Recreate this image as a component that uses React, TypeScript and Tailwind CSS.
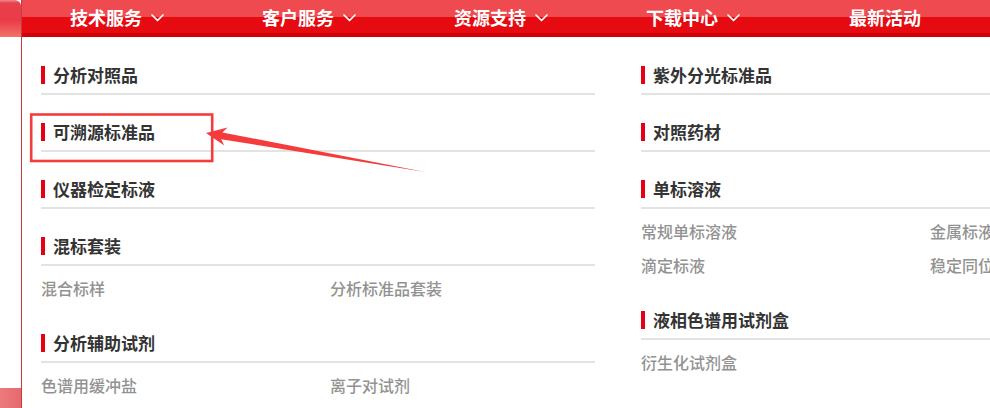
import React from "react";

type Section = { title: string; items?: string[] };

const left: Section[] = [
  { title: "分析对照品" },
  { title: "可溯源标准品" },
  { title: "仪器检定标液" },
  { title: "混标套装", items: ["混合标样", "分析标准品套装"] },
  { title: "分析辅助试剂", items: ["色谱用缓冲盐", "离子对试剂"] },
];

const right: Section[] = [
  { title: "紫外分光标准品" },
  { title: "对照药材" },
  { title: "单标溶液", items: ["常规单标溶液", "金属标液", "滴定标液", "稳定同位素标液"] },
  { title: "液相色谱用试剂盒", items: ["衍生化试剂盒"] },
];

const nav = [
  { label: "技术服务", chev: true },
  { label: "客户服务", chev: true },
  { label: "资源支持", chev: true },
  { label: "下载中心", chev: true },
  { label: "最新活动", chev: false },
];

function Chevron() {
  return (
    <svg width="13" height="8" viewBox="0 0 13 8" className="ml-[9px] mt-[-2px]">
      <polyline points="1,1 6.5,6.5 12,1" fill="none" stroke="white" strokeWidth="1.7" strokeLinecap="round" strokeLinejoin="round" />
    </svg>
  );
}

function Column({ sections }: { sections: Section[] }) {
  return (
    <div className="w-[554px] shrink-0">
      {sections.map((s) => (
        <div key={s.title} className="mb-[19px]">
          <div className="h-[38px] border-b-2 border-[#e3e3e3] flex items-center">
            <div className="w-[4px] h-[18px] bg-[#e60012] mr-[8px]" />
            <span className="text-[17px] font-bold text-[#333] leading-none mt-[-2px]">{s.title}</span>
          </div>
          {s.items && (
            <div className="pt-[6px] grid grid-cols-[289px_289px] auto-rows-[34px]">
              {s.items.map((it) => (
                <div key={it} className="text-[16px] leading-[32px] font-medium text-[#929292] whitespace-nowrap">
                  {it}
                </div>
              ))}
            </div>
          )}
        </div>
      ))}
    </div>
  );
}

export default function App() {
  return (
    <div
      className="relative w-[990px] h-[408px] overflow-hidden bg-white flex"
      style={{ fontFamily: '"Noto Sans CJK SC", "Noto Sans", sans-serif' }}
    >
      {/* left strip */}
      <div className="w-[22px] h-full shrink-0 border-r border-[#c8383c] flex flex-col">
        <div className="h-[37px] rounded-tr-[6px] bg-[linear-gradient(#f08a8e_0,#e8404a_3px,#ea3a48_20px,#f07466_37px)]" />
        <div className="flex-1" />
        <div className="h-[20px] bg-[linear-gradient(90deg,#ec7a7c,#e46a6e)]" />
      </div>

      {/* main */}
      <div className="flex-1 min-w-0 flex flex-col">
        <div className="h-[37px] shrink-0 flex bg-[linear-gradient(#ee4a50_0,#ee4a50_17px,#e60b10_17px,#e60b10_33px,#d00008_33px)]">
          {nav.map((n) => (
            <div key={n.label} className="w-[192px] shrink-0 flex items-center justify-center first:ml-[-1px]">
              <span className="text-[18px] font-bold text-white leading-none mt-[-3px]">{n.label}</span>
              {n.chev && <Chevron />}
            </div>
          ))}
        </div>
        <div className="flex gap-[46px] pl-[19px] pt-[20px]">
          <Column sections={left} />
          <Column sections={right} />
        </div>
      </div>

      {/* annotation overlay */}
      <svg className="absolute inset-0 pointer-events-none" width="990" height="408" viewBox="0 0 990 408">
        <rect x="31.2" y="114.5" width="181" height="46.5" fill="none" stroke="#f53b3b" strokeWidth="2.6" />
        <polygon
          points="206,133 227.5,127.5 222.4,132.4 425,172 221.1,139.2 224.3,145.5"
          fill="#f53b3b"
        />
      </svg>
    </div>
  );
}
